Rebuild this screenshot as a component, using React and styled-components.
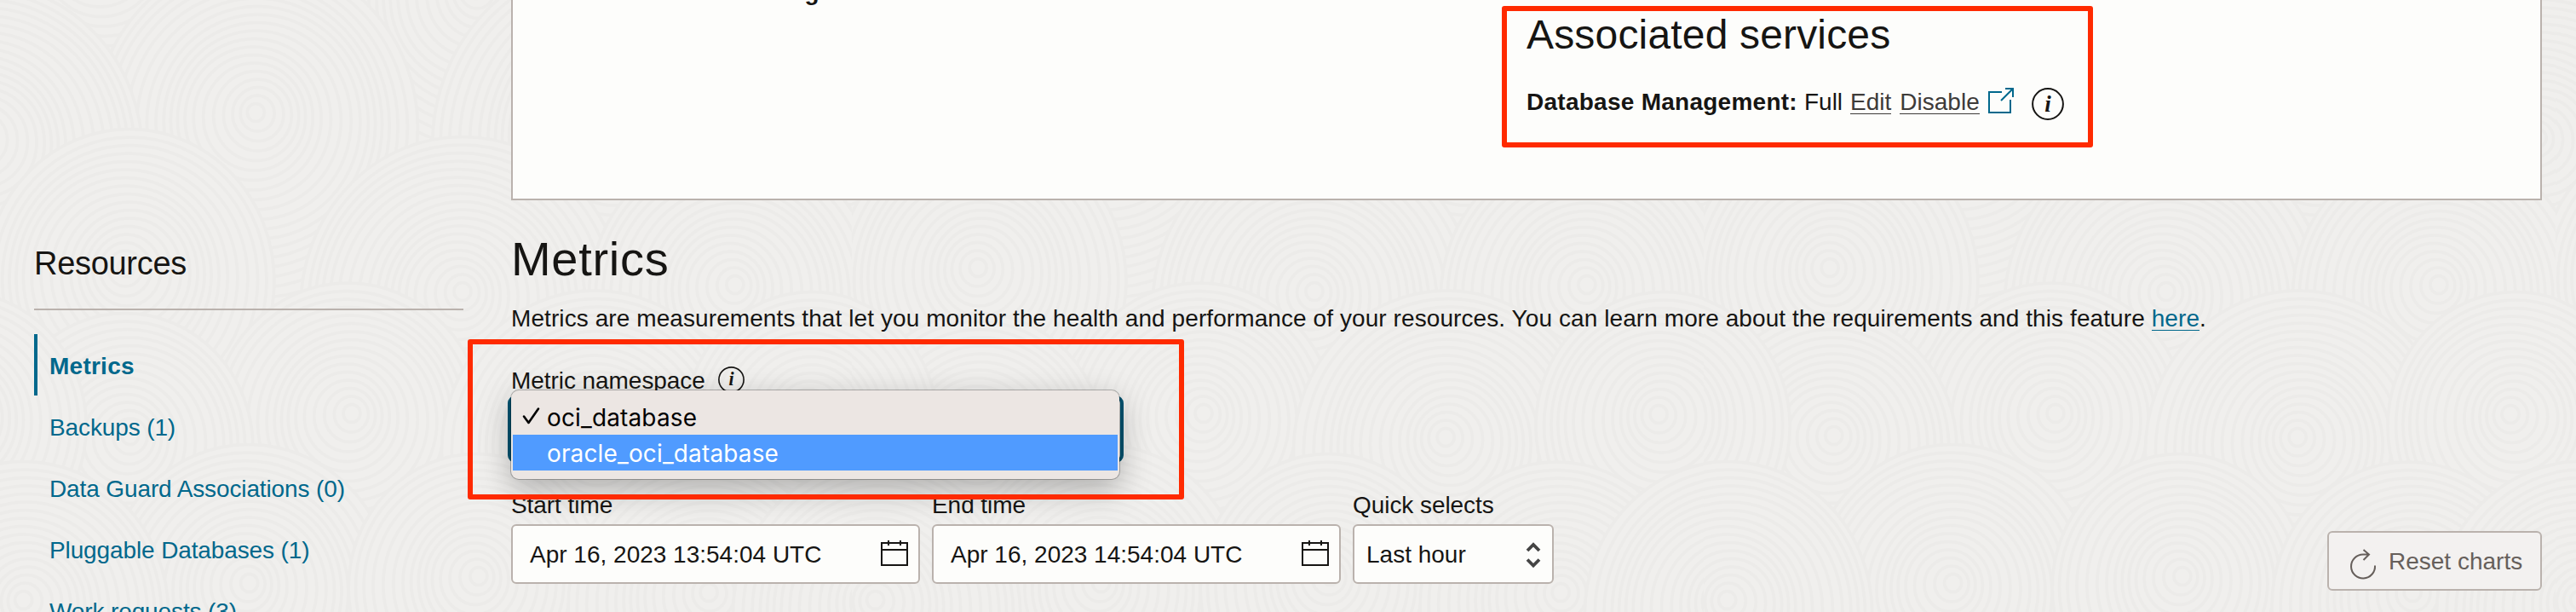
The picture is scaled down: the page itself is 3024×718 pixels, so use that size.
import React from "react";
import styled, { createGlobalStyle, css } from "styled-components";

const Global = createGlobalStyle`
  html, body { margin: 0; padding: 0; }
  body {
    background: #f0efed;
    color: #161513;
    font-family: "Liberation Sans", Arial, sans-serif;
    font-size: 28px;
    line-height: 32px;
    overflow: hidden;
  }
  *, *::before, *::after { box-sizing: border-box; }
`;

const Page = styled.div`
  position: relative;
  width: 3024px;
  height: 718px;
  overflow: hidden;
  display: flex;
  padding-left: 40px;
`;

const Texture = styled.svg`
  position: absolute;
  inset: 0;
`;

const Sidebar = styled.aside`
  position: relative;
  width: 504px;
  margin-right: 56px;
  padding-top: 287px;
  flex: none;
`;

const SidebarTitle = styled.h2`
  margin: 0;
  padding-bottom: 31px;
  border-bottom: 2px solid #bab2ad;
  font-size: 38px;
  font-weight: 300;
  line-height: 44px;
  letter-spacing: -0.3px;
`;

const NavList = styled.nav`
  display: flex;
  flex-direction: column;
  margin-top: 28px;
`;

const NavItem = styled.a`
  height: 72px;
  line-height: 32px;
  padding: 22px 0 0 14px;
  border-left: 4px solid transparent;
  color: #00688c;
  white-space: nowrap;
  letter-spacing: -0.12px;
  ${(p) => p.$active && css`
    border-left-color: #00688c;
    font-weight: 700;
    letter-spacing: 0.25px;
  `}
`;

const Main = styled.main`
  position: relative;
  width: 2384px;
  flex: none;
`;

const DetailsPanel = styled.section`
  height: 235px;
  background: #fdfdfb;
  border: 2px solid #bab2ad;
  border-top: 0;
  display: flex;
  position: relative;
`;

const PanelColumn = styled.div`
  width: ${(p) => p.$width}px;
  padding-left: ${(p) => p.$inset}px;
  flex: none;
`;

const CutOffLabel = styled.div`
  margin-top: -25px;

  b { letter-spacing: 0; }
`;

const ServicesTitle = styled.h2`
  margin: 13px 0 0;
  font-size: 48px;
  font-weight: 400;
  line-height: 56px;
  letter-spacing: 0.17px;
`;

const ServiceRow = styled.div`
  display: flex;
  align-items: flex-start;
  margin-top: 35px;
  white-space: nowrap;

  b { letter-spacing: 0.26px; margin-right: 8px; }
  span { margin-right: 9px; }
  svg { flex: none; }
`;

const ActionLink = styled.a`
  height: 30px;
  color: #3d3b39;
  border-bottom: 1px solid #3d3b39;
  margin-right: 10px;
`;

const SectionTitle = styled.h1`
  margin: 37px 0 0;
  font-size: 56px;
  font-weight: 400;
  line-height: 64px;
  letter-spacing: 0.7px;
`;

const Intro = styled.p`
  margin: 22px 0 0;
  white-space: nowrap;
  letter-spacing: 0.085px;
`;

const InlineLink = styled.a`
  display: inline-block;
  height: 30px;
  color: #00688c;
  border-bottom: 1px solid #00688c;
`;

const FieldLabel = styled.div`
  display: flex;
  align-items: flex-start;
  height: 32px;
  white-space: nowrap;
  letter-spacing: -0.06px;
`;

const NamespaceField = styled.div`
  position: relative;
  margin-top: 41px;
  height: 115px;
`;

const FocusedSelect = styled.div`
  width: 723px;
  height: 79px;
  margin: 1px 0 0 -4px;
  border: 4px solid #00526f;
  border-radius: 9px;
  background: #fdfdfb;
`;

const Menu = styled.div`
  position: absolute;
  top: 27px;
  left: 0;
  width: 714px;
  height: 104px;
  padding: 9px 2px 10px;
  border-radius: 9px;
  background: #ece6e3;
  box-shadow: 0 0 0 1px rgba(0, 0, 0, 0.25), 0 12px 36px rgba(0, 0, 0, 0.28);
`;

const MenuItem = styled.div`
  display: flex;
  align-items: center;
  height: 42px;
  padding-top: 2px;
  font-family: Inter, "Liberation Sans", sans-serif;
  font-size: 28px;
  letter-spacing: 0.14px;
  color: ${(p) => (p.$highlighted ? "#fff" : "#000")};
  background: ${(p) => (p.$highlighted ? "#509bff" : "transparent")};

  &:first-child { height: 43px; padding-top: 3px; }
`;

const CheckSlot = styled.span`
  width: 40px;
  height: 32px;
  padding-left: 10px;
`;

const Controls = styled.div`
  display: flex;
  gap: 14px;
  margin-top: 31px;
`;

const Field = styled.div`
  width: ${(p) => p.$width}px;
`;

const InputBox = styled.div`
  display: flex;
  align-items: center;
  justify-content: space-between;
  height: 70px;
  margin-top: 6px;
  padding: 0 12px 0 ${(p) => p.$inset}px;
  border: 2px solid #bab2ad;
  border-radius: 6px;
  background: #fdfdfb;
  white-space: nowrap;
`;

const InputText = styled.span`
  padding-top: 2px;
`;

const ResetButton = styled.button`
  display: flex;
  align-items: center;
  width: 252px;
  height: 70px;
  margin: 46px 0 0 auto;
  padding: 2px 0 0 24px;
  gap: 12px;
  border: 2px solid #bab2ad;
  border-radius: 6px;
  background: #f3f1f0;
  color: #665f5b;
  font: inherit;
  white-space: nowrap;
`;

const Callout = styled.div`
  position: absolute;
  left: ${(p) => p.$x}px;
  top: ${(p) => p.$y}px;
  width: ${(p) => p.$w}px;
  height: ${(p) => p.$h}px;
  border: 6px solid #ff2a00;
  border-radius: 3px;
`;

const InfoSvg = styled.svg`
  margin: ${(p) => p.$offset || "0"};
  font-family: "Liberation Serif", serif;
  font-style: italic;
  font-weight: 700;
`;

const InfoIcon = ({ size, offset }) => (
  <InfoSvg $offset={offset} width={size} height={size} viewBox="0 0 38 38">
    <circle cx="19" cy="19" r="17.9" fill="none" stroke="#161513" strokeWidth="2" />
    <text x="19" y="27.500" fontSize="27" textAnchor="middle" fill="#161513">i</text>
  </InfoSvg>
);

const ExternalSvg = styled.svg`
  margin-top: -1px;
`;

const ExternalIcon = () => (
  <ExternalSvg width="31" height="31" viewBox="0 0 31 31" fill="none" stroke="#00688c" strokeWidth="2">
    <path d="M16 5H1v24h25V14M15 15L29 1M20 1h9v10" />
  </ExternalSvg>
);

const CalendarIcon = () => (
  <svg width="32" height="32" viewBox="0 0 32 32" fill="none" stroke="#161513" strokeWidth="2">
    <path d="M1 3h30v26H1zM1 11h30M9 0v6M23 0v6" />
  </svg>
);

const StepperIcon = () => (
  <svg width="20" height="32" viewBox="0 0 20 32" fill="none" stroke="#444" strokeWidth="3.8">
    <path d="M3 12l7-7 7 7M3 22.500l7 7 7-7" />
  </svg>
);

const ResetIcon = () => (
  <svg width="34" height="42" viewBox="0 0 34 42" fill="none" stroke="#665f5b" strokeWidth="2">
    <path d="M22 12.500H16A14 14 0 1 0 30 25.500M16.500 7l6.500 5.500-6.500 6.500" />
  </svg>
);

const CheckIcon = () => (
  <svg width="22" height="26" viewBox="0 0 22 26" fill="none" stroke="#000" strokeWidth="2.6" strokeLinecap="round" strokeLinejoin="round">
    <path d="M3 14.500l5.500 7.500L20 5.500" />
  </svg>
);

const HILLS = [
  [120, -40, 210], [560, 10, 230], [860, -60, 200], [300, 150, 190], [720, 170, 210],
  [-20, 180, 190], [980, 180, 190], [150, 330, 170], [540, 360, 190], [860, 350, 170],
  [410, 500, 160], [150, 525, 150], [700, 530, 180], [-50, 500, 150], [950, 500, 150],
  [290, 700, 170], [560, 690, 150], [830, 710, 160], [30, 720, 170], [1030, 720, 170],
];

const Background = () => (
  <Texture width="3024" height="718">
    <defs>
      <pattern id="rings" width="1000" height="718" patternUnits="userSpaceOnUse">
        {HILLS.map(([x, y, r], n) => (
          <g key={n} fill="#f0efed" stroke="#ecebe9" strokeWidth="3.500">
            {Array.from({ length: Math.floor(r / 10) }, (_, i) => (
              <ellipse key={i} cx={x + Math.sin(i * 0.7 + n) * 3} cy={y - i} rx={r - i * 10} ry={(r - i * 10) * 1.05} />
            ))}
          </g>
        ))}
      </pattern>
    </defs>
    <rect width="3024" height="718" fill="url(#rings)" />
  </Texture>
);

const NAV = ["Metrics", "Backups (1)", "Data Guard Associations (0)", "Pluggable Databases (1)", "Work requests (3)"];

export default function App() {
  return (
    <>
      <Global />
      <Page>
        <Background />
        <Sidebar>
          <SidebarTitle>Resources</SidebarTitle>
          <NavList>
            {NAV.map((label, i) => (
              <NavItem key={label} $active={i === 0}>{label}</NavItem>
            ))}
          </NavList>
        </Sidebar>
        <Main>
          <DetailsPanel>
            <PanelColumn $width={1190} $inset={39}>
              <CutOffLabel><b>Database software image:</b> None</CutOffLabel>
            </PanelColumn>
            <PanelColumn $width={1190} $inset={0}>
              <ServicesTitle>Associated services</ServicesTitle>
              <ServiceRow>
                <b>Database Management:</b>
                <span>Full</span>
                <ActionLink>Edit</ActionLink>
                <ActionLink>Disable</ActionLink>
                <ExternalIcon />
                <InfoIcon size={38} offset="-1px 0 0 20px" />
              </ServiceRow>
            </PanelColumn>
          </DetailsPanel>
          <SectionTitle>Metrics</SectionTitle>
          <Intro>
            Metrics are measurements that let you monitor the health and performance of your resources. You can learn more about the requirements and this feature <InlineLink>here</InlineLink>.
          </Intro>
          <NamespaceField>
            <FieldLabel>
              Metric namespace
              <InfoIcon size={31} offset="-1px 0 0 15px" />
            </FieldLabel>
            <FocusedSelect />
            <Menu>
              <MenuItem><CheckSlot><CheckIcon /></CheckSlot>oci_database</MenuItem>
              <MenuItem $highlighted><CheckSlot />oracle_oci_database</MenuItem>
            </Menu>
          </NamespaceField>
          <Controls>
            <Field $width={480}>
              <FieldLabel>Start time</FieldLabel>
              <InputBox $inset={20}><InputText>Apr 16, 2023 13:54:04 UTC</InputText><CalendarIcon /></InputBox>
            </Field>
            <Field $width={480}>
              <FieldLabel>End time</FieldLabel>
              <InputBox $inset={20}><InputText>Apr 16, 2023 14:54:04 UTC</InputText><CalendarIcon /></InputBox>
            </Field>
            <Field $width={236}>
              <FieldLabel>Quick selects</FieldLabel>
              <InputBox $inset={14}><InputText>Last hour</InputText><StepperIcon /></InputBox>
            </Field>
            <ResetButton><ResetIcon />Reset charts</ResetButton>
          </Controls>
        </Main>
        <Callout $x={1763} $y={7} $w={694} $h={166} />
        <Callout $x={549} $y={398} $w={841} $h={188} />
      </Page>
    </>
  );
}
